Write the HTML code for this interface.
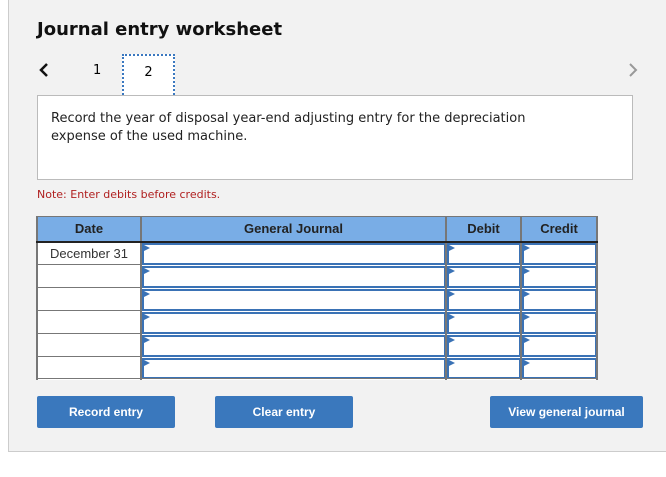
<html><head><style>
body{margin:0;background:#fff;font-family:"DejaVu Sans","Liberation Sans",sans-serif;}
.p{position:absolute;left:8px;top:-1px;width:658px;height:453px;background:#f2f2f2;border-left:1px solid #ccc;border-bottom:1px solid #ccc;box-sizing:border-box}
.a{position:absolute}
h1{position:absolute;left:37px;top:19px;margin:0;font-size:18px;font-weight:bold;color:#111}
.box{left:37px;top:95px;width:596px;height:85px;background:#fff;border:1px solid #bbb;box-sizing:border-box;font-size:13px;line-height:18px;color:#222;padding:14px 90px 14px 13px}
.tab{left:122px;top:54px;width:53px;height:44px;background:#fff;border:2px dotted #3a78c0;box-sizing:border-box;text-align:center;line-height:34px;font-size:13px}
.h{position:absolute;top:216px;height:26px;line-height:26px;text-align:center;font-family:"Liberation Sans",sans-serif;font-weight:bold;font-size:13px;color:#222}
.in{position:absolute;border:2px solid #3a72b5;box-sizing:border-box;background:#fff}
.in:before{content:"";position:absolute;left:0;top:0;border-left:6px solid #3a72b5;border-top:3px solid transparent;border-bottom:3px solid transparent}
.l{position:absolute;background:#777}
.b{position:absolute;top:396px;height:32px;background:#3a78bd;color:#fff;font-family:"Liberation Sans",sans-serif;font-weight:bold;font-size:12px;text-align:center;line-height:32px;border-radius:2px}
</style></head><body>
<div class="p"></div>
<h1>Journal entry worksheet</h1>
<svg class="a" style="left:38px;top:63px" width="12" height="14"><path d="M9 1 L3 7 L9 13" stroke="#111" stroke-width="2.5" fill="none"/></svg>
<div class="a" style="left:93px;top:63px;font-size:13px">1</div>
<div class="a tab">2</div>
<svg class="a" style="left:627px;top:63px" width="12" height="14"><path d="M3 1 L9 7 L3 13" stroke="#999" stroke-width="2" fill="none"/></svg>
<div class="a box">Record the year of disposal year-end adjusting entry for the depreciation expense of the used machine.</div>
<div class="a" style="left:37px;top:188px;font-size:11px;color:#b02020">Note: Enter debits before credits.</div>
<div class="a" style="left:37px;top:216px;width:560px;height:26px;background:#79ade6"></div>
<div class="a" style="left:37px;top:242px;width:560px;height:138px;background:#fff"></div>
<div class="h" style="left:37px;width:104px">Date</div>
<div class="h" style="left:141px;width:305px">General Journal</div>
<div class="h" style="left:446px;width:75px">Debit</div>
<div class="h" style="left:521px;width:76px">Credit</div>
<div class="a" style="left:37px;top:242px;width:104px;height:23px;line-height:23px;text-align:center;font-family:'Liberation Sans',sans-serif;font-size:13px;color:#333">December 31</div>
<div id="g"></div>
<div class="b" style="left:37px;width:138px">Record entry</div>
<div class="b" style="left:215px;width:138px">Clear entry</div>
<div class="b" style="left:490px;width:153px">View general journal</div>
<script>
var xs=[37,141,446,521,597],ys=[216,242,265,288,311,334,357,379],h='';
for(var r=1;r<7;r++)for(var c=1;c<4;c++){h+='<div class="in" style="left:'+(xs[c]+1)+'px;top:'+(ys[r]+1)+'px;width:'+(xs[c+1]-xs[c]-1)+'px;height:'+(ys[r+1]-ys[r]-1)+'px"></div>';}
for(var i=0;i<xs.length;i++)h+='<div class="l" style="left:'+(xs[i]-1)+'px;top:216px;width:2px;height:164px"></div>';
for(var j=0;j<ys.length;j++)if(j==0||j==7||true){var x0=(j==0||j==1||j==7)?36:36;h+='<div class="l" style="left:36px;top:'+(ys[j]-(j==0?0:1))+'px;width:'+(j==0||j==1||j==7?562:106)+'px;height:'+(j==1?2:1)+'px;'+(j==1?'background:#222':'')+'"></div>';}
document.getElementById('g').innerHTML=h;
</script>
</body></html>
